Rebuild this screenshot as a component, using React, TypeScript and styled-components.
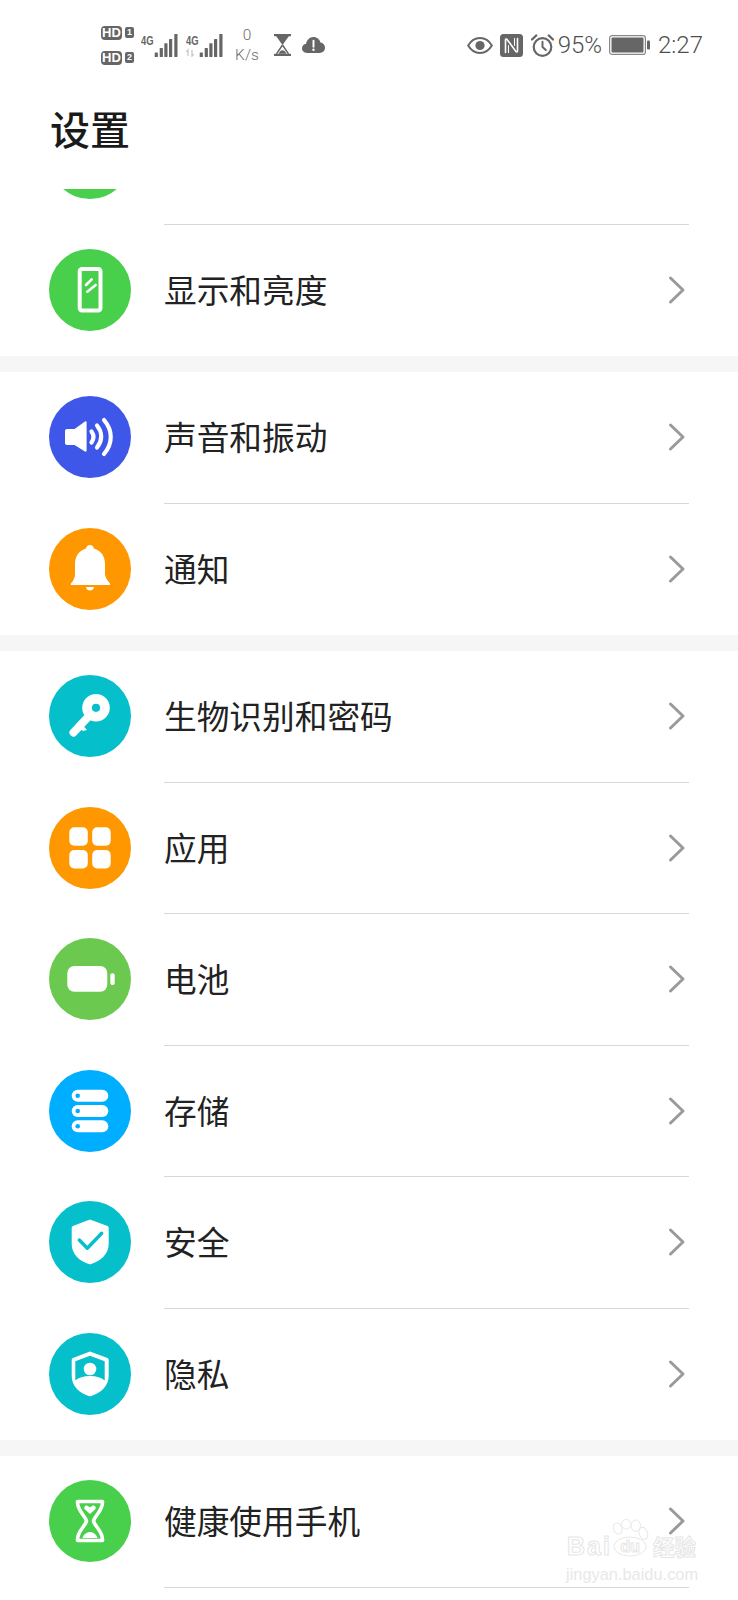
import React from "react";
import styled, { createGlobalStyle } from "styled-components";

const Global = createGlobalStyle`
  html, body { margin: 0; padding: 0; background: #fff; }
  body { font-family: "Noto Sans CJK SC", "Noto Sans", sans-serif; }
  * { box-sizing: border-box; }
`;

const Page = styled.div`
  position: relative;
  width: 738px;
  height: 1600px;
  overflow: hidden;
  background: #fff;
  display: flex;
  flex-direction: column;
`;

const StatusBar = styled.header`
  height: 90px;
  flex: none;
  display: flex;
  align-items: center;
  justify-content: space-between;
  padding: 0 35px 0 101px;
  color: #666;
  font-family: Roboto, "Liberation Sans", sans-serif;
`;

const StatusGroup = styled.div`
  display: flex;
  align-items: center;
`;

const Slot = styled.div<{ $ml?: number }>`
  display: flex;
  align-items: center;
  margin-left: ${(p) => p.$ml ?? 0}px;
  svg { display: block; }
`;

const HdStack = styled.div`
  display: flex;
  flex-direction: column;
  gap: 11px;
`;

const HdLine = styled.div`
  display: flex;
  align-items: center;
  gap: 3px;
`;

const HdBadge = styled.span`
  width: 21px;
  height: 14px;
  border-radius: 4px;
  background: #666;
  color: #fff;
  font: 700 13px/14px "Liberation Sans", sans-serif;
  text-align: center;
`;

const SimBadge = styled.span`
  width: 9px;
  height: 11px;
  border-radius: 2px;
  background: #666;
  color: #fff;
  font: 700 9px/11px "Liberation Sans", sans-serif;
  text-align: center;
`;

const Speed = styled.div`
  width: 28px;
  display: flex;
  flex-direction: column;
  align-items: center;
  color: #6e6e6e;
  font-size: 15.500px;
  line-height: 20px;
  font-weight: 300;
`;

const StatusText = styled.span`
  font-size: 24px;
  line-height: 28px;
  font-weight: 300;
  color: #4f4f4f;
`;

const TitleBar = styled.div`
  height: 99px;
  flex: none;
  padding: 0 0 0 50px;
`;

const Title = styled.h1`
  margin: 0;
  font-size: 40px;
  line-height: 76px;
  font-weight: 500;
  color: #1a1a1a;
`;

const List = styled.main`
  flex: 1;
  min-height: 0;
  overflow: hidden;
  display: flex;
  flex-direction: column;
`;

const Section = styled.section<{ $scrolled?: boolean }>`
  flex: none;
  margin-top: ${(p) => (p.$scrolled ? "-96px" : "0")};
  & + & { border-top: 16px solid #f6f6f6; }
`;

const Row = styled.div`
  height: 131.500px;
  display: flex;
  align-items: center;
  padding-left: 49px;
`;

const IconCircle = styled.div<{ $color: string }>`
  width: 82px;
  height: 82px;
  flex: none;
  margin-bottom: 1px;
  border-radius: 50%;
  background: ${(p) => p.$color};
  svg { display: block; }
`;

const RowBody = styled.div<{ $divider: boolean }>`
  flex: 1;
  align-self: stretch;
  margin: 0 49px 0 33px;
  display: flex;
  align-items: center;
  justify-content: space-between;
  border-bottom: 1px solid ${(p) => (p.$divider ? "#d8d8d8" : "transparent")};
`;

const RowLabel = styled.span`
  font-size: 32.700px;
  line-height: 44px;
  padding-bottom: 2px;
  font-weight: 400;
  color: #222;
`;

const Chevron = styled.svg`
  width: 18px;
  height: 30px;
  margin-right: 3px;
  flex: none;
`;

const Watermark = styled.div`
  position: absolute;
  right: 40px;
  bottom: 16px;
  width: 134px;
  display: flex;
  flex-direction: column;
  align-items: flex-start;
  pointer-events: none;
`;

const MarkRow = styled.div`
  display: flex;
  align-items: flex-end;
  height: 40px;
  padding-left: 3px;
`;

const MarkBai = styled.span`
  width: 45px;
  font: 700 25px/24px "Liberation Sans", sans-serif;
  color: #fff;
  -webkit-text-stroke: 1px #e6e6e6;
  letter-spacing: 2px;
`;

const MarkCn = styled.span`
  font: 700 21.500px/24px "Noto Sans CJK SC", sans-serif;
  color: #fff;
  -webkit-text-stroke: 1px #e6e6e6;
  margin-left: 3px;
  white-space: nowrap;
`;

const MarkUrl = styled.span`
  margin-top: 6px;
  padding-left: 2px;
  font: 400 16.400px/20px "Liberation Sans", sans-serif;
  color: #e8e8e8;
  white-space: nowrap;
`;

const Svg: React.FC<{ children: React.ReactNode }> = ({ children }) => (
  <svg width="82" height="82" viewBox="0 0 82 82" fill="none">
    {children}
  </svg>
);

const TEAL = "#05bfca";
const GREEN = "#48cf4b";
const ORANGE = "#ff9800";

const PhoneIcon = () => (
  <Svg>
    <rect x="30.700" y="20" width="20.800" height="41.400" rx="2.200" stroke="#fff" strokeWidth="4" />
    <path d="M37 36l5.700-5.700M38.300 42.700l8.400-6.700" stroke="#fff" strokeWidth="2.600" strokeLinecap="round" />
  </Svg>
);

const SoundIcon = () => (
  <Svg>
    <path d="M18 33h7.500L36 25.500c.8-.5 1.600 0 1.600 1v28c0 1-.8 1.500-1.600 1L25.500 49H18c-1.200 0-2-.8-2-2V35c0-1.200.8-2 2-2z" fill="#fff" />
    <path d="M42.500 35.500c2.600 3.600 2.600 7.400 0 11M48 29.500c5.600 7 5.600 15 0 22M55 24c9 10.500 9 23.500 0 34" stroke="#fff" strokeWidth="4.200" strokeLinecap="round" />
  </Svg>
);

const BellIcon = () => (
  <Svg>
    <path d="M41 17c2.200 0 3.800 1.600 3.900 3.600C52 22.500 56 28.500 56 36v10c0 3 2 6 5 9.500.6.800.2 1.500-.8 1.500H22.800c-1 0-1.400-.7-.8-1.500C25 52 26 49 26 46V36c0-7.500 4-13.500 11.100-15.400C37.200 18.600 38.800 17 41 17z" fill="#fff" />
    <path d="M37 59h8c-.4 2.300-2 3.600-4 3.600s-3.600-1.300-4-3.600z" fill="#fff" />
  </Svg>
);

const KeyIcon = () => (
  <Svg>
    <path fillRule="evenodd" clipRule="evenodd" d="M47 19a13.800 13.800 0 1 1 0 27.600 13.800 13.800 0 0 1 0-27.600zm0 9.700a4.100 4.100 0 1 0 0 8.200 4.100 4.100 0 0 0 0-8.200z" fill="#fff" />
    <path d="M40 41L24.500 57.500" stroke="#fff" strokeWidth="8" strokeLinecap="round" />
    <path d="M30 46l8 9-4 1-3-2-2 1-4-3z" fill="#fff" />
  </Svg>
);

const AppsIcon = () => (
  <Svg>
    <rect x="20.300" y="20.300" width="18.500" height="18.500" rx="5" fill="#fff" />
    <rect x="43.200" y="20.300" width="18.500" height="18.500" rx="5" fill="#fff" />
    <rect x="20.300" y="43" width="18.500" height="18.500" rx="5" fill="#fff" />
    <rect x="43.200" y="43" width="18.500" height="18.500" rx="5" fill="#fff" />
  </Svg>
);

const BatteryIcon = () => (
  <Svg>
    <rect x="18.300" y="28" width="40" height="25.700" rx="7" fill="#fff" />
    <rect x="61.300" y="35.300" width="4.400" height="11.700" rx="2" fill="#fff" />
  </Svg>
);

const StorageIcon = () => (
  <Svg>
    {[19.7, 35, 50.3].map((y) => (
      <g key={y}>
        <rect x="22.700" y={y} width="36.600" height="12" rx="6" fill="#fff" />
        <circle cx="28.700" cy={y + 6} r="2.300" fill="#00aeff" />
      </g>
    ))}
  </Svg>
);

const SHIELD = "M41 18.500l17.500 6.500c.8.300 1.200.9 1.200 1.700V43c0 9.500-7.500 17-18 20.200-.5.200-.9.200-1.400 0C29.800 60 22.700 52.500 22.700 43V26.700c0-.8.400-1.400 1.200-1.700z";

const ShieldIcon = () => (
  <Svg>
    <path d={SHIELD} fill="#fff" />
    <path d="M30.300 39l8 8.300 14.400-15" stroke={TEAL} strokeWidth="3.400" strokeLinecap="round" strokeLinejoin="round" />
  </Svg>
);

const PrivacyIcon = () => (
  <Svg>
    <path d={SHIELD} fill="#fff" />
    <path d="M41 22.800l14.700 5.400V47.500C52.500 44.500 47.500 43 41 43s-11.500 1.500-14.700 4.500V28.200z" fill={TEAL} />
    <circle cx="41" cy="36" r="6.300" fill="#fff" />
  </Svg>
);

const HealthIcon = () => (
  <Svg>
    <path d="M28.500 21.500H53.500C54 31 46 35 44.500 41 46 47 54 51 53.500 60.500H28.500C28 51 36 47 37.500 41 36 35 28 31 28.500 21.500z" stroke="#fff" strokeWidth="3.600" strokeLinejoin="round" />
    <path d="M41 34l-5.200-4.800c-2-2.200 1.600-5.200 3.600-3 .7.700 1.600 1.100 1.600 1.100s.9-.4 1.600-1.100c2-2.200 5.600.8 3.600 3z" fill="#fff" />
    <path d="M33.500 58c1-3.500 4.500-6 7.500-6s6.500 2.500 7.500 6z" fill="#fff" />
  </Svg>
);

const Arrow = () => (
  <Chevron viewBox="0 0 18 30" fill="none">
    <path d="M2.500 3l12.500 12L2.500 27" stroke="#9a9a9a" strokeWidth="3" strokeLinecap="round" strokeLinejoin="round" />
  </Chevron>
);

const Signal: React.FC<{ data?: boolean }> = ({ data }) => (
  <svg width="37" height="23" viewBox="0 0 37 23">
    <text x="0" y="11" fontSize="13" fontWeight="700" fontFamily="Liberation Sans, sans-serif" fill="#666" textLength="12.500" lengthAdjust="spacingAndGlyphs">4G</text>
    {data && <path d="M2 22v-6l-1.800 1.800M6 16v6l1.800-1.800" stroke="#ccc" strokeWidth="1.400" fill="none" />}
    <g fill="#666">
      <rect x="13.700" y="18.500" width="3.200" height="4.500" rx=".6" />
      <rect x="18.700" y="14" width="3.200" height="9" rx=".4" />
      <rect x="23.300" y="9.300" width="3.200" height="13.700" rx=".4" />
      <rect x="28" y="5" width="3.200" height="18" rx=".4" />
      <rect x="33.300" y="0" width="3.200" height="23" rx=".4" />
    </g>
  </svg>
);

const StatusHourglass = () => (
  <svg width="17" height="22" viewBox="0 0 17 22" fill="none">
    <rect width="17" height="2.200" fill="#666" />
    <rect y="19.800" width="17" height="2.200" fill="#666" />
    <path d="M2 2h13L8.500 11z" fill="#666" />
    <path d="M8.500 11L2.500 19.800M8.500 11l6 8.800" stroke="#666" strokeWidth="1.500" />
    <path d="M4.500 19.800c1-2.500 2.700-3.500 4-3.500s3 1 4 3.500z" fill="#666" />
  </svg>
);

const CloudAlert = () => (
  <svg width="23" height="16" viewBox="0 0 23 16" fill="none">
    <path d="M5 16C2.200 16 0 14 0 11.300 0 8.900 1.800 7 4.100 6.700 4.800 2.900 7.700 0 11.500 0c3.400 0 6.200 2.300 7 5.600 2.600.4 4.500 2.600 4.500 5.200 0 2.900-2.300 5.200-5.200 5.200z" fill="#666" />
    <path d="M11.500 3.800v6" stroke="#fff" strokeWidth="2" strokeLinecap="round" />
    <circle cx="11.500" cy="12.700" r="1.200" fill="#fff" />
  </svg>
);

const EyeIcon = () => (
  <svg width="26" height="17" viewBox="0 0 26 17" fill="none">
    <path d="M1.200 8.500C3.900 3.700 8.200 1.100 13 1.100s9.100 2.600 11.800 7.400c-2.700 4.800-7 7.400-11.800 7.400S3.900 13.300 1.200 8.500z" stroke="#666" strokeWidth="2" />
    <circle cx="13" cy="8.500" r="4.600" fill="#666" />
  </svg>
);

const NfcIcon = () => (
  <svg width="23" height="23" viewBox="0 0 23 23" fill="none">
    <rect width="23" height="23" rx="3.500" fill="#666" />
    <path d="M5.500 18.500V6c0-1 .9-1.300 1.600-.5l8.800 12c.7.800 1.600.5 1.600-.5V4.500" stroke="#fff" strokeWidth="1.600" strokeLinecap="round" />
    <path d="M8.500 18.500V11.500M14.500 4.500v7" stroke="#fff" strokeWidth="1.100" strokeLinecap="round" />
  </svg>
);

const AlarmIcon = () => (
  <svg width="23" height="23" viewBox="0 0 23 23" fill="none">
    <circle cx="11.500" cy="13" r="8.800" stroke="#666" strokeWidth="2.200" />
    <path d="M11.500 7.800V13l3.300 3" stroke="#666" strokeWidth="2" strokeLinecap="round" />
    <path d="M1 5.500L5.200 1.500M22 5.500L17.800 1.500" stroke="#666" strokeWidth="2.400" strokeLinecap="round" />
  </svg>
);

const BatteryStatus = () => (
  <svg width="41" height="20" viewBox="0 0 41 20" fill="none">
    <rect x=".6" y=".6" width="35.800" height="18.800" rx="2.500" stroke="#888" strokeWidth="1.200" />
    <rect x="2.500" y="2.500" width="32" height="15" rx="1" fill="#666" />
    <rect x="38" y="5.500" width="3" height="9" rx="1" fill="#666" />
  </svg>
);

const PawMark = () => (
  <svg width="38" height="40" viewBox="0 0 40 40" fill="#fff" stroke="#e6e6e6" strokeWidth="1">
    <ellipse cx="6" cy="10" rx="4.500" ry="6" transform="rotate(-20 6 10)" />
    <ellipse cx="15" cy="5.500" rx="5" ry="5" />
    <ellipse cx="25" cy="7" rx="5" ry="6" />
    <ellipse cx="33" cy="15" rx="4.500" ry="6.500" transform="rotate(-20 33 15)" />
    <ellipse cx="19" cy="29" rx="17" ry="10" />
    <text x="19" y="35" textAnchor="middle" fontSize="17" fontWeight="700" fontFamily="Liberation Sans, sans-serif">du</text>
  </svg>
);

type Item = { label: string; color: string; icon: React.ReactNode };

const sections: Item[][] = [
  [
    { label: "声音和振动", color: "#3f57e8", icon: <SoundIcon /> },
    { label: "通知", color: ORANGE, icon: <BellIcon /> },
  ],
  [
    { label: "生物识别和密码", color: TEAL, icon: <KeyIcon /> },
    { label: "应用", color: ORANGE, icon: <AppsIcon /> },
    { label: "电池", color: "#6cc94f", icon: <BatteryIcon /> },
    { label: "存储", color: "#00aeff", icon: <StorageIcon /> },
    { label: "安全", color: TEAL, icon: <ShieldIcon /> },
    { label: "隐私", color: TEAL, icon: <PrivacyIcon /> },
  ],
];

export default function App() {
  return (
    <Page>
      <Global />
      <StatusBar>
        <StatusGroup>
          <HdStack>
            <HdLine><HdBadge>HD</HdBadge><SimBadge>1</SimBadge></HdLine>
            <HdLine><HdBadge>HD</HdBadge><SimBadge>2</SimBadge></HdLine>
          </HdStack>
          <Slot $ml={7}><Signal /></Slot>
          <Slot $ml={8}><Signal data /></Slot>
          <Slot $ml={10}><Speed><span>0</span><span>K/s</span></Speed></Slot>
          <Slot $ml={13}><StatusHourglass /></Slot>
          <Slot $ml={11}><CloudAlert /></Slot>
        </StatusGroup>
        <StatusGroup>
          <EyeIcon />
          <Slot $ml={7}><NfcIcon /></Slot>
          <Slot $ml={8}><AlarmIcon /></Slot>
          <Slot $ml={4}><StatusText>95%</StatusText></Slot>
          <Slot $ml={7}><BatteryStatus /></Slot>
          <Slot $ml={8}><StatusText>2:27</StatusText></Slot>
        </StatusGroup>
      </StatusBar>
      <TitleBar><Title>设置</Title></TitleBar>
      <List>
        <Section $scrolled>
          <Row>
            <IconCircle $color={GREEN} />
            <RowBody $divider />
          </Row>
          <Row>
            <IconCircle $color={GREEN}><PhoneIcon /></IconCircle>
            <RowBody $divider={false}><RowLabel>显示和亮度</RowLabel><Arrow /></RowBody>
          </Row>
        </Section>
        {sections.map((items) => (
          <Section key={items[0].label}>
            {items.map((it, i) => (
              <Row key={it.label}>
                <IconCircle $color={it.color}>{it.icon}</IconCircle>
                <RowBody $divider={i < items.length - 1}>
                  <RowLabel>{it.label}</RowLabel>
                  <Arrow />
                </RowBody>
              </Row>
            ))}
          </Section>
        ))}
        <Section>
          <Row>
            <IconCircle $color={GREEN}><HealthIcon /></IconCircle>
            <RowBody $divider><RowLabel>健康使用手机</RowLabel><Arrow /></RowBody>
          </Row>
        </Section>
      </List>
      <Watermark>
        <MarkRow>
          <MarkBai>Bai</MarkBai>
          <PawMark />
          <MarkCn>经验</MarkCn>
        </MarkRow>
        <MarkUrl>jingyan.baidu.com</MarkUrl>
      </Watermark>
    </Page>
  );
}
